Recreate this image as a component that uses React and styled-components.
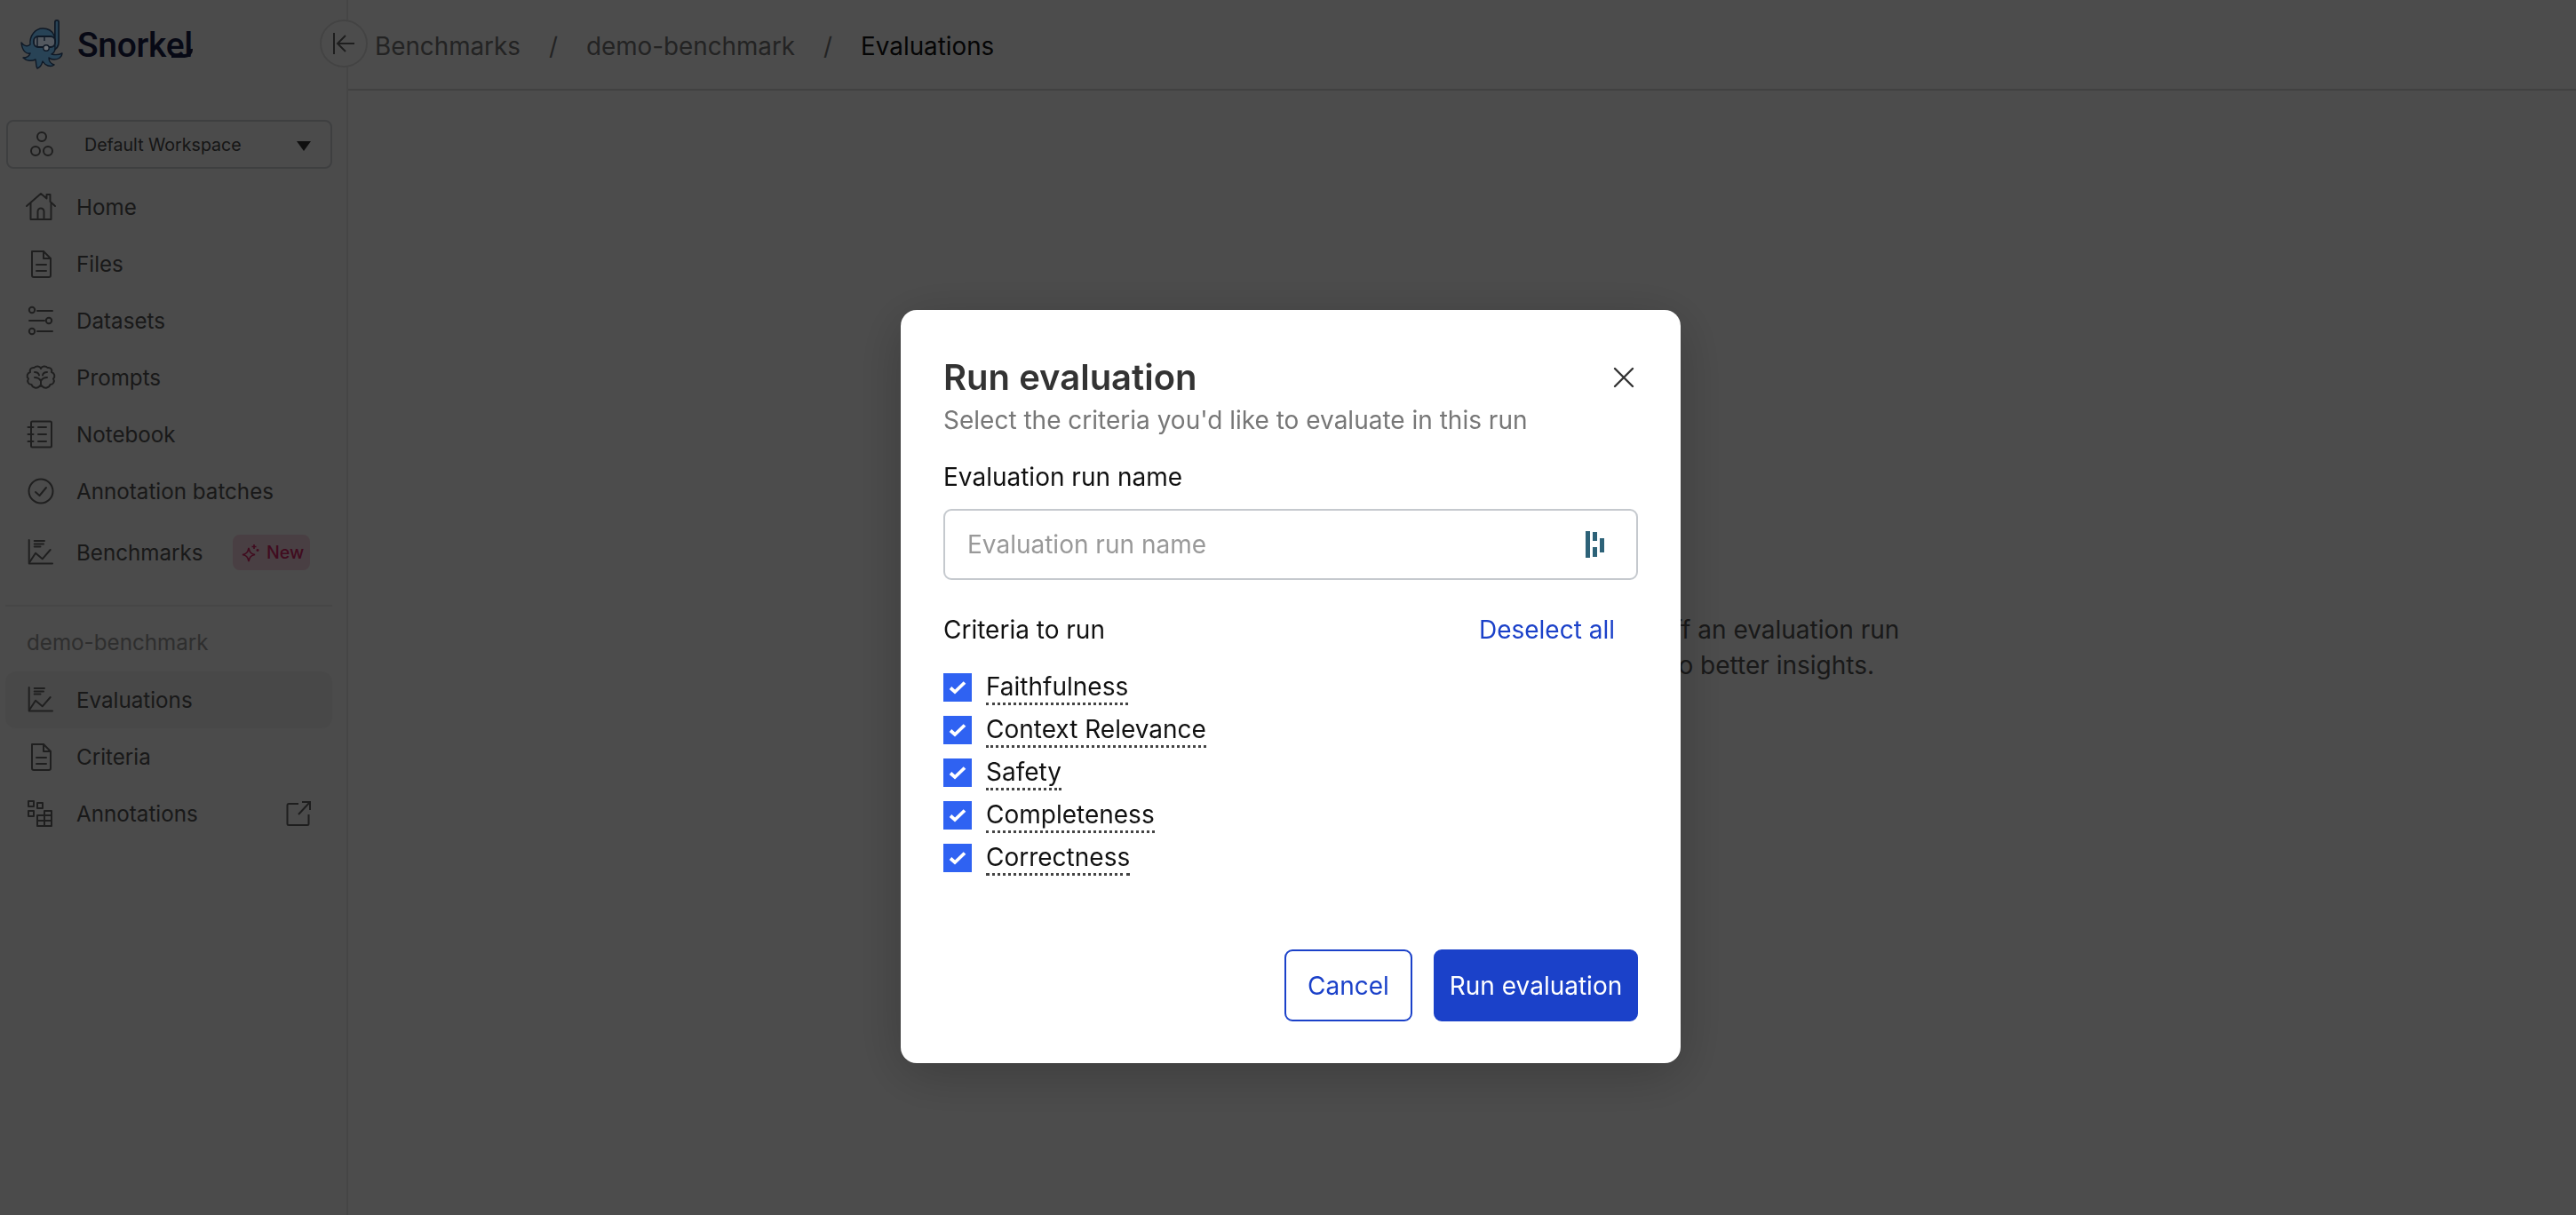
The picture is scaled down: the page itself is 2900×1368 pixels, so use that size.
import React from "react";
import styled, { createGlobalStyle } from "styled-components";

const GlobalStyle = createGlobalStyle`
  html, body {
    margin: 0;
    padding: 0;
    background: #fff;
    font-family: Inter, "Liberation Sans", sans-serif;
  }
  * { box-sizing: border-box; }
`;

const Page = styled.div`
  display: flex;
  width: 2900px;
  height: 1368px;
  overflow: hidden;
  background: #fff;
`;

// Sidebar
const Sidebar = styled.aside`
  display: flex;
  flex-direction: column;
  flex: none;
  width: 392px;
  padding: 0 16px 0 6px;
  border-right: 2px solid #e6e6e6;
  background: #fbfbfb;
`;

const LogoRow = styled.div`
  display: flex;
  align-items: center;
  gap: 7px;
  height: 100px;
  padding-left: 14px;
`;

// sits over the dim layer, the mark keeps its colours in the reference
const LogoMark = styled.svg`
  position: relative;
  z-index: 2;
  flex: none;
  width: 60px;
  height: 60px;
`;

const LogoText = styled.span`
  position: relative;
  font-family: Roboto, sans-serif;
  font-size: 39px;
  font-weight: 500;
  letter-spacing: -0.3px;
  color: #1a2048;
  line-height: 1;
  margin-top: 2px;
`;

const LogoHook = styled.i`
  position: absolute;
  right: 0;
  bottom: 6px;
  width: 24px;
  height: 10px;
  border: solid #1a2048;
  border-width: 0 4px 4px 0;
  border-bottom-right-radius: 9px;
`;

const WorkspaceSelect = styled.button`
  display: flex;
  align-items: center;
  flex: none;
  width: 367px;
  height: 55px;
  margin: 35px 0 11px 1px;
  padding: 0 22px 0 24px;
  background: transparent;
  border: 2px solid #d0d3d8;
  border-radius: 8px;
  font: 400 19.600px Inter, sans-serif;
  color: #4a4a4a;
  text-align: left;
`;

const WorkspaceName = styled.span`
  flex: 1;
  margin-left: 34px;
`;

const Caret = styled.span`
  width: 0;
  height: 0;
  border-left: 8.500px solid transparent;
  border-right: 8.500px solid transparent;
  border-top: 11px solid #333;
  margin-top: 4px;
`;

const NavItem = styled.div`
  display: flex;
  align-items: center;
  flex: none;
  height: 64px;
  margin-top: ${({ $offset }) => $offset || 0}px;
  padding: 0 24px 0 22px;
  border-radius: 12px;
  font-size: 24.200px;
  color: #555;
  background: ${({ $active }) => ($active ? "#f1f1f1" : "transparent")};
`;

const NavIcon = styled.svg`
  flex: none;
  width: 36px;
  height: 36px;
  margin-right: 22px;
  fill: none;
  stroke: #6a6a6a;
  stroke-width: 2;
  stroke-linecap: round;
  stroke-linejoin: round;
`;

const NavLabel = styled.span`
  flex: 1;
  white-space: nowrap;
`;

const NewBadge = styled.span`
  display: flex;
  align-items: center;
  gap: 8px;
  width: 87px;
  height: 40px;
  margin-right: 1px;
  padding-left: 10px;
  border-radius: 8px;
  background: #f6d2e0;
  color: #d82868;
  font-size: 19.600px;
  font-weight: 500;
`;

const Divider = styled.div`
  flex: none;
  height: 2px;
  margin: 27px 0 26px;
  background: #ececec;
`;

const SectionName = styled.div`
  flex: none;
  height: 30px;
  margin: 0 0 17px 24px;
  font-size: 24.200px;
  line-height: 30px;
  color: #9a9a9a;
`;

// Main area
const Main = styled.main`
  position: relative;
  flex: 1;
  display: flex;
  flex-direction: column;
`;

const TopBar = styled.header`
  display: flex;
  align-items: center;
  flex: none;
  height: 102px;
  padding: 3px 0 0 30px;
  border-bottom: 2px solid #d9d9d9;
  font-size: 27.800px;
`;

const Crumb = styled.span`
  color: ${({ $current }) => ($current ? "#111" : "#777")};
`;

const CrumbSep = styled.span`
  margin: 0 32px;
  color: #777;
`;

const CollapseButton = styled.button`
  position: absolute;
  left: -32px;
  top: 22px;
  display: flex;
  align-items: center;
  justify-content: center;
  width: 54px;
  height: 54px;
  padding: 0;
  background: #fff;
  border: 2px solid #e0e0e0;
  border-radius: 50%;
`;

const EmptyState = styled.div`
  flex: 1;
  display: flex;
  align-items: center;
  justify-content: center;
  padding: 0 0 12px 648px;
  text-align: center;
  font-size: 28px;
  line-height: 40px;
  color: #555;
`;

// Modal
const Overlay = styled.div`
  position: fixed;
  inset: 0;
  display: flex;
  align-items: flex-start;
  justify-content: center;
  padding: 349px 0 0 6px;
  background: rgba(0, 0, 0, 0.7);
`;

const Modal = styled.div`
  display: flex;
  flex-direction: column;
  width: 878px;
  height: 848px;
  padding: 50px 48px 0;
  background: #fff;
  border-radius: 18px;
  box-shadow: 0 12px 60px rgba(0, 0, 0, 0.22);
`;

const ModalHead = styled.div`
  display: flex;
  align-items: center;
  justify-content: space-between;
  height: 52px;
`;

const Title = styled.h2`
  margin: 0;
  font-size: 40px;
  font-weight: 600;
  line-height: 52px;
  color: #333;
`;

const CloseIcon = styled.svg`
  width: 26px;
  height: 26px;
  margin-right: 3px;
  stroke: #333;
  stroke-width: 2.400;
  stroke-linecap: round;
`;

const Subtitle = styled.p`
  margin: 0;
  font-size: 28px;
  line-height: 44px;
  color: #777;
`;

const FieldLabel = styled.div`
  margin-top: 22px;
  font-size: 28px;
  line-height: 40px;
  color: #111;
`;

const InputBox = styled.div`
  display: flex;
  align-items: center;
  justify-content: space-between;
  height: 80px;
  margin-top: 16px;
  padding: 0 35px 0 25px;
  border: 2px solid #c5c9ce;
  border-radius: 9px;
`;

const Placeholder = styled.span`
  font-size: 28px;
  color: #999;
`;

const CriteriaHead = styled.div`
  display: flex;
  justify-content: space-between;
  align-items: center;
  height: 40px;
  margin-top: 36px;
  padding-right: 26px;
  font-size: 28px;
  color: #111;
`;

const LinkText = styled.span`
  color: #1b41c9;
`;

const CriteriaList = styled.div`
  display: flex;
  flex-direction: column;
  gap: 16px;
  margin-top: 29px;
`;

const CriteriaRow = styled.label`
  display: flex;
  align-items: center;
  gap: 16px;
  height: 32px;
`;

const CheckBox = styled.span`
  display: flex;
  align-items: center;
  justify-content: center;
  width: 32px;
  height: 32px;
  background: #2f62f2;
`;

const CriteriaName = styled.span`
  font-size: 28px;
  line-height: 35px;
  margin-top: 2px;
  color: #111;
  border-bottom: 3px dotted #444;
`;

const Actions = styled.div`
  display: flex;
  justify-content: flex-end;
  gap: 24px;
  margin-top: 87px;
`;

const Button = styled.button`
  height: 81px;
  padding: 0;
  width: ${({ $wide }) => ($wide ? "230px" : "144px")};
  border: 2px solid #1b41c9;
  border-radius: 9px;
  font: 400 28px Inter, sans-serif;
  color: ${({ $primary }) => ($primary ? "#fff" : "#1b41c9")};
  background: ${({ $primary }) => ($primary ? "#1b41c9" : "#fff")};
`;

const icons = {
  home: (
    <>
      <path d="M2 17 18 3l6.500 5.500V4h4v8L34 17" />
      <path d="M6.500 14v18h23V14" />
      <path d="M14.500 32v-9a3.500 3.500 0 0 1 7 0v9" />
    </>
  ),
  file: (
    <>
      <path d="M8 4h13l8 8v19a2 2 0 0 1-2 2H10a2 2 0 0 1-2-2V4z" />
      <path d="M21 4v8h8M13 19h11M13 26h11" />
    </>
  ),
  datasets: (
    <>
      <circle cx="8" cy="6" r="3.200" />
      <circle cx="27" cy="18" r="3.200" />
      <circle cx="8" cy="30" r="3.200" />
      <path d="M14 7h17M5 18h17M14 30h17" />
    </>
  ),
  brain: (
    <>
      <path d="M18 8c-1-3-5.500-3.500-7.500-1-3.500-.5-5.500 2-4.500 5-3.500 1-4.500 5-2 7.500-2 3 0 6.500 3.500 6.500 1 3.500 6 5 9 2l1.500-2" />
      <path d="M18 8c1-3 5.500-3.500 7.500-1 3.500-.5 5.500 2 4.500 5 3.500 1 4.500 5 2 7.500 2 3 0 6.500-3.500 6.500-1 3.500-6 5-9 2L18 26" />
      <path d="M18 28v-6c-1.500-3-4-4-7-4M18 22c1.500-3 4-4 7-4M11 12c2.500 0 4.500 1 5 3.500M25 12c-2.500 0-4.500 1-5 3.500" />
    </>
  ),
  notebook: (
    <>
      <rect x="7" y="3.500" width="23" height="29" rx="1.500" />
      <path d="M3.500 10h6M3.500 18h6M3.500 26h6M15 10h9M15 18h9M15 26h9" />
    </>
  ),
  check: (
    <>
      <circle cx="18" cy="18" r="13.500" />
      <path d="M12 19l4.500 4L24 14" />
    </>
  ),
  chart: (
    <>
      <path d="M4.700 4v26.500H31" />
      <path d="M10.700 5H22M10.700 8.400H21M10.700 11.600H17.500" />
      <path d="M5.300 29 12 18.700l7.700 6.600 9-10.300" />
    </>
  ),
  squares: (
    <>
      <path d="M4 4h6v6H4zM14 6h6v6h-6zM4 15h6v6H4z" />
      <path d="M14 32V20h8v-5h8v17zM14 26h16M22 20h8M22 20v12M30 20v6" />
    </>
  ),
};

const navTop = [
  ["home", "Home"],
  ["file", "Files"],
  ["datasets", "Datasets"],
  ["brain", "Prompts"],
  ["notebook", "Notebook"],
  ["check", "Annotation batches"],
];

const criteria = ["Faithfulness", "Context Relevance", "Safety", "Completeness", "Correctness"];

function Icon({ name }) {
  return <NavIcon viewBox="0 0 36 36">{icons[name]}</NavIcon>;
}

function SnorkelMark() {
  return (
    <LogoMark viewBox="0 0 60 60">
      <path d="M44 5v22c0 4-2 7-6 8" fill="none" stroke="#0f1926" strokeWidth="6" strokeLinecap="round" />
      <path d="M44 5v22c0 4-2 7-6 8" fill="none" stroke="#284356" strokeWidth="2.600" strokeLinecap="round" />
      <path
        d="M14 30C13 20 20 12 28 12c6 0 11 3 13 8l1 14c0 4-2 6-4 7 4 1 8 1 12-1 0 4-4 7-9 7-3 0-5-1-6-2 0 4 3 7 6 8-4 3-10 1-13-4-1 4-3 7-6 8-2-3-1-7-2-10-4 2-10 2-14-2 4 0 7-2 8-5-4 1-9-2-10-12 3 4 7 5 10 2z"
        fill="#284356"
        stroke="#0f1926"
        strokeWidth="1.400"
        strokeLinejoin="round"
      />
      <rect x="18" y="21" width="24" height="12" rx="5" fill="#53585f" stroke="#0f1926" strokeWidth="1.800" />
      <path d="M22 22v10M30 22v4" fill="none" stroke="#0f1926" strokeWidth="1.400" />
      <circle cx="32" cy="34" r="3.200" fill="#6b6f75" stroke="#0f1926" strokeWidth="1.400" />
    </LogoMark>
  );
}

export default function App() {
  return (
    <>
      <GlobalStyle />
      <Page>
        <Sidebar>
          <LogoRow>
            <SnorkelMark />
            <LogoText>
              Snorkel
              <LogoHook />
            </LogoText>
          </LogoRow>
          <WorkspaceSelect>
            <svg width="28" height="34" viewBox="0 0 28 34" fill="none" stroke="#666" strokeWidth="2">
              <circle cx="14" cy="8" r="5" />
              <circle cx="7" cy="24" r="5" />
              <circle cx="21" cy="24" r="5" />
            </svg>
            <WorkspaceName>Default Workspace</WorkspaceName>
            <Caret />
          </WorkspaceSelect>
          {navTop.map(([icon, label]) => (
            <NavItem key={label}>
              <Icon name={icon} />
              <NavLabel>{label}</NavLabel>
            </NavItem>
          ))}
          <NavItem $offset={5}>
            <Icon name="chart" />
            <NavLabel>Benchmarks</NavLabel>
            <NewBadge>
              <svg width="20" height="22" viewBox="0 0 20 22" fill="none" stroke="#d82868" strokeWidth="1.600">
                <path d="M8 6c1 5 2.500 6.500 7 7.500-4.500 1-6 2.500-7 7.500-1-5-2.500-6.500-7-7.500C5.500 12.500 7 11 8 6z" />
                <path d="M14 2v5M11.500 4.500h5M18 7v3M16.500 8.500h3" />
              </svg>
              New
            </NewBadge>
          </NavItem>
          <Divider />
          <SectionName>demo-benchmark</SectionName>
          <NavItem $active>
            <Icon name="chart" />
            <NavLabel>Evaluations</NavLabel>
          </NavItem>
          <NavItem>
            <Icon name="file" />
            <NavLabel>Criteria</NavLabel>
          </NavItem>
          <NavItem>
            <Icon name="squares" />
            <NavLabel>Annotations</NavLabel>
            <svg width="28" height="28" viewBox="0 0 28 28" fill="none" stroke="#666" strokeWidth="2">
              <path d="M14 3H3a1.500 1.500 0 0 0-1.500 1.500v21A1.500 1.500 0 0 0 3 27h21a1.500 1.500 0 0 0 1.500-1.500V15" />
              <path d="M14 15 27 1M18 1h9v9" />
            </svg>
          </NavItem>
        </Sidebar>
        <Main>
          <CollapseButton>
            <svg width="30" height="30" viewBox="0 0 30 30" fill="none" stroke="#666" strokeWidth="2">
              <path d="M4 3v24M27 15H9M17 6l-9 9 9 9" />
            </svg>
          </CollapseButton>
          <TopBar>
            <Crumb>Benchmarks</Crumb>
            <CrumbSep>/</CrumbSep>
            <Crumb>demo-benchmark</Crumb>
            <CrumbSep>/</CrumbSep>
            <Crumb $current>Evaluations</Crumb>
          </TopBar>
          <EmptyState>
            Kick off an evaluation run
            <br />
            get to better insights.
          </EmptyState>
        </Main>
        <Overlay>
          <Modal>
            <ModalHead>
              <Title>Run evaluation</Title>
              <CloseIcon viewBox="0 0 26 26">
                <path d="M3 3l20 20M23 3 3 23" />
              </CloseIcon>
            </ModalHead>
            <Subtitle>Select the criteria you'd like to evaluate in this run</Subtitle>
            <FieldLabel>Evaluation run name</FieldLabel>
            <InputBox>
              <Placeholder>Evaluation run name</Placeholder>
              <svg width="22" height="30" viewBox="0 0 22 30" fill="#2d6278">
                <rect x="0" y="0" width="5" height="30" />
                <rect x="8" y="1" width="5" height="10" />
                <rect x="8" y="18" width="5" height="11" />
                <rect x="16" y="8" width="5" height="16" />
              </svg>
            </InputBox>
            <CriteriaHead>
              Criteria to run
              <LinkText>Deselect all</LinkText>
            </CriteriaHead>
            <CriteriaList>
              {criteria.map((name) => (
                <CriteriaRow key={name}>
                  <CheckBox>
                    <svg width="20" height="16" viewBox="0 0 20 16" fill="none" stroke="#fff" strokeWidth="3.800">
                      <path d="M2 8.500 7 13 18 2.500" />
                    </svg>
                  </CheckBox>
                  <CriteriaName>{name}</CriteriaName>
                </CriteriaRow>
              ))}
            </CriteriaList>
            <Actions>
              <Button>Cancel</Button>
              <Button $primary $wide>Run evaluation</Button>
            </Actions>
          </Modal>
        </Overlay>
      </Page>
    </>
  );
}
